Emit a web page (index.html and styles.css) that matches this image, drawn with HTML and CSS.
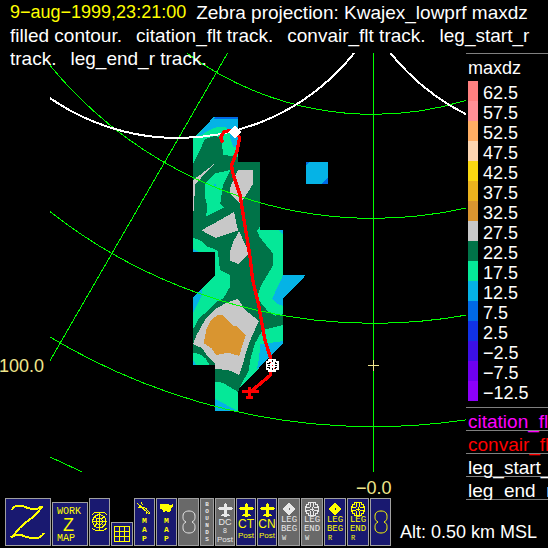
FILE: index.html
```html
<!DOCTYPE html>
<html lang="en">
<head>
<meta charset="utf-8">
<title>Zebra projection</title>
<link rel="stylesheet" href="styles.css">
</head>
<body>
<svg class="defs" width="0" height="0" aria-hidden="true">
  <symbol id="plane" viewBox="0 0 45 42"><path d="M18 3h3V0h3v3h3v9h15v3h3v3h-3v3H27v12h6v3h3v3h-9v3h-9v-3H9v-3h3v-3h6V21H3v-3H0v-3h3v-3h15z" fill="currentColor"/></symbol>
  <symbol id="diamond" viewBox="0 0 42 42"><path fill-rule="evenodd" d="M21 1 41 21 21 41 1 21zM20 19v4h4v-4z" fill="currentColor"/></symbol>
  <symbol id="wheel" viewBox="0 0 42 42"><path d="M10.500 1.500H31.500V7.500H37.500V13.500H40.500V28.500H37.500V34.500H31.500V40.500H10.500V34.500H4.500V28.500H1.500V13.500H4.500V7.500H10.500zM16.500 3v12M25.500 3v12M16.500 27v12M25.500 27v12M3 16.500h12M3 25.500h12M27 16.500h12M27 25.500h12M21 15v12M15 21h12" fill="none" stroke="currentColor" stroke-width="3"/></symbol>
  <symbol id="rings" viewBox="0 0 42 72"><path d="M12 36C3 31 3 27 3 19C3 8 10 3 21 3S39 8 39 19C39 27 39 31 30 36C39 41 39 45 39 53C39 64 32 69 21 69S3 64 3 53C3 45 3 41 12 36z" fill="none" stroke="currentColor" stroke-width="3"/></symbol>
</svg>

<header class="title">
  <p><time>9−aug−1999,23:21:00</time><span>Zebra projection: Kwajex_lowprf maxdz</span></p>
  <p><span>filled contour.</span><span>citation_flt track.</span><span>convair_flt track.</span><span>leg_start_r</span></p>
  <p><span>track.</span><span>leg_end_r track.</span></p>
</header>

<main class="display">
  <div class="y-axis"><span>100.0</span></div>
  <figure class="plot">
    <svg class="map" viewBox="30 9 1248 1257" shape-rendering="crispEdges" role="img" aria-label="maxdz filled contour">
      <path fill="#05e898" d="M459 264 525 202H594V336H660V540H729V676H797L729 745V881L594 1018V1083H525V945H459V744L525 676V606H459z"/>
      <path fill="#05b3e6" d="M470 258 520 202H594V291H580L571 265 568 242 557 232 530 231 505 242 485 255zM715 540H729V555zM729 676H797L729 745V768L712 762 697 745zM459 744 485 718V737L459 790zM660 883 729 873V881L650 960 658 920zM525 1047 594 1083H525zM459 597 478 606H459zM459 932 470 945H459zM798 336H864V402H798z"/>
      <path fill="#0069e6" d="M525 202H594V207H519zM864 382V402H845zM798 336H808L798 346z"/>
      <path fill="#007348" d="M459 342 495 268 525 258 543 262 550 315 594 320V336H660V530L651 543 660 563 699 610V646L684 672 664 705 654 735 657 752 685 785 705 797 729 793V825L668 840 645 880 632 925 625 965 605 1000 594 1026 548 998 525 996V945H508L497 925 478 912 459 908V838L475 808 535 752 550 745 570 710V675L540 660 534 606 530 600 503 590 482 572 459 563z"/>
      <path fill="#05e898" d="M525 370 572 360 549 405 541 460 552 472 498 500 502 470 495 440V402z"/>
      <path fill="#05b3e6" d="M522 402h6v9h-6z"/>
      <path fill="#c8c8c8" d="M525 340 483 384 465 402V435L462 440V483H459V390L480 375zM594 360H639V402L612 445 600 462 583 445 568 430 573 405zM582 486 594 542 528 564 484 541 535 513zM597 543 628 610 595 642 570 632V606L580 575zM594 747 603 760 610 775 657 813 635 860 620 900 612 930 598 975 565 960 525 957V942L500 915 487 895 459 882 470 855 495 810 530 775 560 758z"/>
      <path fill="#d99530" d="M540 795H548L580 828H590L618 855 609 880 598 918 565 908 528 915 515 895 491 880 500 835 515 808 530 797z"/>
      <!-- range rings and azimuth lines -->
      <g fill="none" stroke="#00ff00" stroke-width="3">
        <circle cx="1000" cy="-750" r="943"/>
        <circle cx="1000" cy="-750" r="1255"/>
        <circle cx="1000" cy="-750" r="1570"/>
        <circle cx="1000" cy="-750" r="1880"/>
        <path d="M30 1221 125 1265M563 9 30 932M1000.500 9V1266"/>
      </g>
      <g fill="none" stroke="#fff" stroke-width="6">
        <circle cx="414" cy="-411" r="675"/>
        <circle cx="1580" cy="-411" r="675"/>
      </g>
      <path d="M985 946.500h32M1000.500 931v32" stroke="#f0e68c" stroke-width="3"/>
      <!-- convair track -->
      <path fill="none" stroke="#f00" stroke-width="10" d="M548 278 542 262 552 246 570 241 586 246 599 262 592 300 575 345 577 365 600 435 630 620 638 690 655 760 675 870 692 925V975L635 1022"/>
      <path d="M605 1024H656M629 1010V1048M619 1043H639" stroke="#f00" stroke-width="8"/>
      <path fill="#fff" d="M585 228 605 247 585 267 566 247z"/>
      <path fill="#fff" d="M685 927H709V933H716V960H709V966H685V960H678V933H685z"/>
      <path d="M687 936v5h-5M707 936v5h5M687 957v-5h-5M707 957v-5h5M697 931v6M697 955v6M684 946h6M704 946h6" fill="none" stroke="#000" stroke-width="3"/>
      <path d="M691 936v3M703 955v3M697 944v4" stroke="#f00" stroke-width="3"/>
    </svg>
    <figcaption>−0.0</figcaption>
  </figure>
  <aside class="legend">
    <h2>maxdz</h2>
    <ul class="scale">
      <li class="c1">62.5</li>
      <li class="c2">57.5</li>
      <li class="c3">52.5</li>
      <li class="c4">47.5</li>
      <li class="c5">42.5</li>
      <li class="c6">37.5</li>
      <li class="c7">32.5</li>
      <li class="c8">27.5</li>
      <li class="c9">22.5</li>
      <li class="c10">17.5</li>
      <li class="c11">12.5</li>
      <li class="c12">7.5</li>
      <li class="c13">2.5</li>
      <li class="c14">−2.5</li>
      <li class="c15">−7.5</li>
      <li class="c16">−12.5</li>
    </ul>
    <ul class="tracks">
      <li class="citation">citation_flt</li>
      <li class="convair">convair_flt</li>
      <li>leg_start_r</li>
      <li>leg_end_r</li>
    </ul>
  </aside>
</main>

<footer class="bar">
  <nav class="tools" aria-label="Overlays">
    <button type="button" class="tool w46" aria-label="Zebra">
      <svg class="fill" viewBox="18 27 132 138" shape-rendering="crispEdges"><path d="M37 60Q36 50 52 48Q66 46 84 54Q108 62 124 50L130 53M124 52Q110 76 84 92Q56 112 40 139M33 142Q48 132 66 136Q92 146 108 145Q126 142 131 129" fill="none" stroke="currentColor" stroke-width="6"/></svg>
    </button>
    <button type="button" class="tool work">
      <span class="t10">WORK</span><span class="z">Z</span><span class="t10">MAP</span>
    </button>
    <button type="button" class="tool w21" aria-label="Range rings">
      <svg class="fill" viewBox="270 27 57 138" shape-rendering="crispEdges"><g fill="none" stroke="currentColor" stroke-width="3"><circle cx="298" cy="94" r="20"/><circle cx="298" cy="94" r="9"/><path d="M298 66V122M276 94H320M284 80 292 88M304 100 312 108M312 80 304 88M292 100 284 108M277 74Q281 67 288 67H308Q316 67 319 74M277 114Q281 121 288 121H308Q316 121 319 114"/></g></svg>
    </button>
    <button type="button" class="tool short" aria-label="Grid">
      <svg class="fill" viewBox="336 99 60 66" shape-rendering="crispEdges"><path d="M343.500 109.500H388.500V154.500H343.500zM358.500 109V155M373.500 109V155M343 124.500H389M343 139.500H389" fill="none" stroke="currentColor" stroke-width="3"/></svg>
    </button>
    <button type="button" class="tool w21">
      <svg class="i17" viewBox="15 30 57 51" shape-rendering="crispEdges"><path d="M22 42 30 52M33 39 37 48M30 50 58 76M38 54 48 58 60 74M24 54 32 56M48 68 52 76" fill="none" stroke="currentColor" stroke-width="3"/></svg>
      <span class="stack">M<br>A<br>P</span>
    </button>
    <button type="button" class="tool w21">
      <svg class="i17" viewBox="81 30 57 51" shape-rendering="crispEdges"><path d="M90 44H118V48H126V44H130V52L124 58V66H120V69H112L108 66H104V69H98V63L91 59z" fill="currentColor"/></svg>
      <span class="stack">M<br>A<br>P</span>
    </button>
    <button type="button" class="tool w21 off rings" aria-label="Rings">
      <svg class="eight"><use href="#rings"/></svg>
    </button>
    <button type="button" class="tool w14 off">
      <span class="stack tiny">B<br>O<br>U<br>N<br>D<br>S</span>
    </button>
    <button type="button" class="tool w20 off post">
      <svg class="plane" shape-rendering="crispEdges"><use href="#plane"/></svg>
      <span class="t9">DC</span><span class="t7">8</span><span class="t8">Post</span>
    </button>
    <button type="button" class="tool w20 post">
      <svg class="plane" shape-rendering="crispEdges"><use href="#plane"/></svg>
      <span class="t12">CT</span><span class="t8">Post</span>
    </button>
    <button type="button" class="tool w20 post">
      <svg class="plane" shape-rendering="crispEdges"><use href="#plane"/></svg>
      <span class="t12">CN</span><span class="t8">Post</span>
    </button>
    <button type="button" class="tool w22 off leg">
      <svg class="mark" shape-rendering="crispEdges"><use href="#diamond"/></svg>
      <span>LEG<br>BEG</span><span class="t7">W</span>
    </button>
    <button type="button" class="tool w22 off leg">
      <svg class="mark" shape-rendering="crispEdges"><use href="#wheel"/></svg>
      <span>LEG<br>END</span><span class="t7">W</span>
    </button>
    <button type="button" class="tool w22 leg">
      <svg class="mark" shape-rendering="crispEdges"><use href="#diamond"/></svg>
      <span>LEG<br>BEG</span><span class="t7">R</span>
    </button>
    <button type="button" class="tool w22 leg">
      <svg class="mark" shape-rendering="crispEdges"><use href="#wheel"/></svg>
      <span>LEG<br>END</span><span class="t7">R</span>
    </button>
    <button type="button" class="tool w21 rings" aria-label="Rings">
      <svg class="eight"><use href="#rings"/></svg>
    </button>
  </nav>
  <p class="alt">Alt: 0.50 km MSL</p>
</footer>
</body>
</html>
```
FILE: styles.css
```css
* { box-sizing: border-box; }

html { background: #000; }

body {
  margin: 0;
  position: relative;
  overflow: hidden;
  background: #000;
  color: #fff;
  font: 18px/23px "Liberation Sans", Arial, sans-serif;
}

p, h2, ul, figure { margin: 0; padding: 0; }
ul { list-style: none; }
.defs { position: absolute; }

/* The title lies over the top edge of the map. */
.title {
  position: absolute;
  z-index: 1;
  top: 1px;
  left: 10px;
  white-space: nowrap;
  font-size: 19px;
}
.title p { display: flex; gap: 14px; }
.title time { margin-right: -4px; font-size: 18px; color: #ff0; }

.display {
  display: grid;
  grid-template-columns: 50px minmax(0, 1fr) 82px;
  padding-top: 53px;
}

.y-axis {
  padding-right: 6px;
  padding-top: 302px;
  text-align: right;
  color: #f0e68c;
}
.y-axis span { float: right; }

.map { display: block; width: 100%; height: auto; }
.plot figcaption {
  padding: 5px 0 0 306px;
  height: 26px;
  line-height: 23px;
  color: #f0e68c;
}

.legend {
  border-top: 1px solid #808080;
  overflow: hidden;
  white-space: nowrap;
}
.legend h2 {
  padding: 3px 0 0 2px;
  height: 27px;
  font-size: 18px;
  font-weight: normal;
}
.scale li {
  display: flex;
  gap: 5px;
  margin-left: 2px;
  height: 20px;
  line-height: 24px;
}
.scale li::before {
  content: "";
  width: 10px;
  background: var(--c);
}
.c1 { --c: #ff8080; }
.c2 { --c: #ff9096; }
.c3 { --c: #ffae64; }
.c4 { --c: #fcd5b0; }
.c5 { --c: #fad812; }
.c6 { --c: #ebb31e; }
.c7 { --c: #d99530; }
.c8 { --c: #c8c8c8; }
.c9 { --c: #007348; }
.c10 { --c: #05e898; }
.c11 { --c: #05b3e6; }
.c12 { --c: #0069e6; }
.c13 { --c: #1132e6; }
.c14 { --c: #3c10e6; }
.c15 { --c: #6e00f0; }
.c16 { --c: #8c00fa; }

.tracks {
  margin-top: 6px;
  border-top: 1px solid #808080;
  font-size: 19px;
}
.tracks li {
  padding-left: 2px;
  height: 23px;
  line-height: 27px;
  border-bottom: 1px solid #808080;
}
.citation { color: #f0f; }
.convair { color: #f00; }

.bar {
  display: flex;
  align-items: flex-end;
  justify-content: space-between;
  margin-top: -2px;
  padding: 0 11px 2px 5px;
}
.tools {
  display: flex;
  align-items: flex-end;
  gap: 1px;
}
.alt { padding-bottom: 2px; white-space: nowrap; }

.tool {
  display: flex;
  flex-direction: column;
  align-items: center;
  flex: none;
  height: 48px;
  margin: 0;
  padding: 0;
  border: 1px solid #a0a0a0;
  overflow: hidden;
  background: #191970;
  color: #ff0;
  font: 9px/9px "Liberation Mono", monospace;
}
.tool.off { background: #696969; color: #e8e8e8; }
.tool svg { display: block; flex: none; }
.tool .fill { width: 100%; height: 100%; }
.w46 { width: 46px; }
.w22 { width: 22px; }
.w21 { width: 21px; }
.w20 { width: 20px; }
.w14 { width: 14px; }
.short { width: 22px; height: 24px; }

.work {
  width: 36px;
  height: 44px;
  padding: 3px 0 0 4px;
  align-items: flex-start;
}
.t10 { font-size: 10px; line-height: 11px; }
.z {
  padding-left: 6px;
  font: 18px/16px "Liberation Sans", Arial, sans-serif;
}

.i17 { width: 19px; height: 17px; }
.stack { font-size: 8px; font-weight: bold; line-height: 9px; }
.tiny { padding-top: 2px; font-size: 6px; line-height: 7px; }

.rings { justify-content: center; }
.eight { width: 14px; height: 24px; }

.post { padding-top: 4px; font-family: "Liberation Sans", Arial, sans-serif; }
.plane { width: 15px; height: 14px; }
.t12 { font-size: 12px; line-height: 14px; }
.t9 { font-size: 9px; line-height: 10px; }
.t8 { font-size: 8px; line-height: 9px; }
.t7 { font-size: 7px; line-height: 8px; }

.leg { padding-top: 3px; }
.mark { width: 14px; height: 14px; }
.leg .t7 { align-self: flex-start; padding-left: 3px; }
```
